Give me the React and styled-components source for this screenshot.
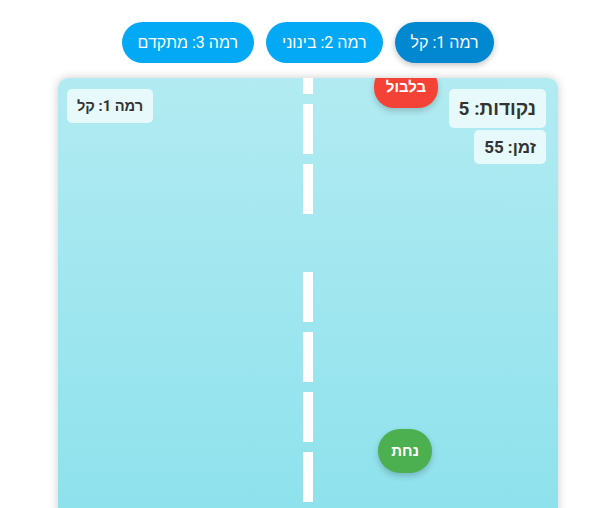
import React from "react";
import styled, { createGlobalStyle } from "styled-components";

const Global = createGlobalStyle`
  html, body { margin: 0; padding: 0; background: #ffffff; overflow: hidden; }
  body { font-family: Roboto, "Noto Sans", "Liberation Sans", Arial, sans-serif; }
`;

const Page = styled.div`
  direction: rtl;
  display: flex;
  flex-direction: column;
  align-items: center;
  padding-top: 22px;
  gap: 15px;
`;

const Levels = styled.div`
  display: flex;
  gap: 12px;
`;

const LevelButton = styled.button`
  font-family: inherit;
  font-size: 16px;
  height: 41px;
  padding: 0 16px;
  border: none;
  border-radius: 25px;
  color: #ffffff;
  background: ${(p) => (p.$active ? "#0288D1" : "#03A9F4")};
  box-shadow: ${(p) => (p.$active ? "0 2px 6px rgba(0,0,0,0.25)" : "none")};
  cursor: pointer;
`;

const Game = styled.div`
  position: relative;
  width: 500px;
  height: 600px;
  overflow: hidden;
  border-radius: 10px;
  background: linear-gradient(to bottom, #b2ebf2, #80deea);
  box-shadow: 0 0 10px rgba(0, 0, 0, 0.2);
`;

const Dash = styled.div`
  position: absolute;
  left: 245px;
  width: 10px;
  height: 50px;
  background: #ffffff;
`;

const Panel = styled.div`
  background: rgba(255, 255, 255, 0.7);
  border-radius: 5px;
  color: #333;
  font-weight: bold;
  font-size: ${(p) => p.$size}px;
  padding: 0 10px;
  height: ${(p) => p.$h}px;
  display: flex;
  align-items: center;
`;

const StatsColumn = styled.div`
  position: absolute;
  top: 11px;
  right: 12px;
  display: flex;
  flex-direction: column;
  align-items: flex-start;
  gap: 2px;
`;

const LevelTag = styled.div`
  position: absolute;
  top: 11px;
  left: 9px;
`;

const Piece = styled.div`
  position: absolute;
  display: flex;
  align-items: center;
  justify-content: center;
  color: #fff;
  font-weight: bold;
  font-size: 15px;
  box-shadow: 0 3px 6px rgba(0, 0, 0, 0.2);
`;

const Obstacle = styled(Piece)`
  left: 316px;
  top: -12px;
  width: 64px;
  height: 42px;
  border-radius: 20px;
  background: #f44336;
`;

const Player = styled(Piece)`
  left: 320px;
  top: 351px;
  width: 54px;
  height: 44px;
  border-radius: 22px;
  background: #4caf50;
`;

const dashes = [-34, 26, 86, 194, 254, 314, 374];

export default function App() {
  return (
    <>
      <Global />
      <Page>
        <Levels>
          <LevelButton $active>רמה 1: קל</LevelButton>
          <LevelButton>רמה 2: בינוני</LevelButton>
          <LevelButton>רמה 3: מתקדם</LevelButton>
        </Levels>
        <Game>
          {dashes.map((t, i) => (
            <Dash key={i} style={{ top: t }} />
          ))}
          <Obstacle>בלבול</Obstacle>
          <Player>נחת</Player>
          <StatsColumn>
            <Panel $size={19} $h={39}>נקודות: 5</Panel>
            <Panel $size={17} $h={34}>זמן: 55</Panel>
          </StatsColumn>
          <LevelTag>
            <Panel $size={14.6} $h={34}>רמה 1: קל</Panel>
          </LevelTag>
        </Game>
      </Page>
    </>
  );
}
